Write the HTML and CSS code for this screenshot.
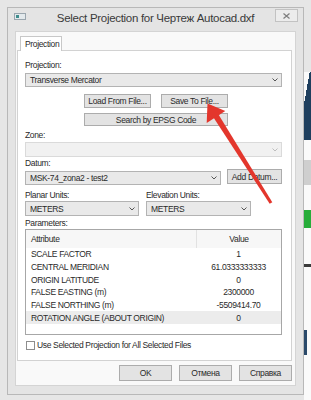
FILE: index.html
```html
<!DOCTYPE html>
<html lang="en">

<head>
  <meta charset="UTF-8">
  <meta name="viewport" content="width=device-width, initial-scale=1.0">
  <title>Select Projection</title>
  <link rel="stylesheet" href="styles.css">
</head>

<body>
  <div class="screen">
    <div class="dialog">
      <div class="title-bar">
        <svg class="app-icon" width="12" height="7" viewBox="0 0 12 7">
          <rect x="0.5" y="0.5" width="11" height="6" fill="#e3e9ec" stroke="#9aa6ae" />
          <rect x="2" y="2" width="3" height="3" fill="#3f8c8c" />
        </svg>
        <div class="title">Select Projection for Чертеж Autocad.dxf</div>
        <div class="close-btn">
          <svg width="7" height="6" viewBox="0 0 7 6">
            <path d="M0.5 0.5 L6.5 5.5 M6.5 0.5 L0.5 5.5" stroke="#7d7d7d" stroke-width="1.2" fill="none" />
          </svg>
        </div>
      </div>

      <div class="client">
        <div class="tabs">
          <div class="tab">Projection</div>
        </div>

        <div class="tab-page">
          <div class="label">Projection:</div>
          <div class="combo combo-projection">
            <span>Transverse Mercator</span>
            <svg class="chevron" width="6" height="4" viewBox="0 0 6 4"><polyline points="0.5,0.5 3,3 5.5,0.5" /></svg>
          </div>

          <div class="file-buttons">
            <div class="button-row">
              <div class="btn btn-file">Load From File...</div>
              <div class="btn btn-file">Save To File...</div>
            </div>
            <div class="btn btn-epsg">Search by EPSG Code</div>
          </div>

          <div class="label label-zone">Zone:</div>
          <div class="combo combo-zone disabled">
            <span></span>
            <svg class="chevron" width="6" height="4" viewBox="0 0 6 4"><polyline points="0.5,0.5 3,3 5.5,0.5" /></svg>
          </div>

          <div class="label">Datum:</div>
          <div class="datum-row">
            <div class="combo combo-datum">
              <span>MSK-74_zona2 - test2</span>
              <svg class="chevron" width="6" height="4" viewBox="0 0 6 4"><polyline points="0.5,0.5 3,3 5.5,0.5" /></svg>
            </div>
            <div class="btn btn-datum">Add Datum...</div>
          </div>

          <div class="units-grid">
            <div class="label">Planar Units:</div>
            <div class="label">Elevation Units:</div>
            <div class="combo combo-units">
              <span>METERS</span>
              <svg class="chevron" width="6" height="4" viewBox="0 0 6 4"><polyline points="0.5,0.5 3,3 5.5,0.5" /></svg>
            </div>
            <div class="combo combo-units">
              <span>METERS</span>
              <svg class="chevron" width="6" height="4" viewBox="0 0 6 4"><polyline points="0.5,0.5 3,3 5.5,0.5" /></svg>
            </div>
          </div>

          <div class="label label-params">Parameters:</div>
          <div class="params">
            <div class="params-head">
              <div class="col-attr">Attribute</div>
              <div class="col-value">Value</div>
            </div>
            <div class="params-row">
              <div class="col-attr">SCALE FACTOR</div>
              <div class="col-value">1</div>
            </div>
            <div class="params-row">
              <div class="col-attr">CENTRAL MERIDIAN</div>
              <div class="col-value">61.0333333333</div>
            </div>
            <div class="params-row">
              <div class="col-attr">ORIGIN LATITUDE</div>
              <div class="col-value">0</div>
            </div>
            <div class="params-row">
              <div class="col-attr">FALSE EASTING (m)</div>
              <div class="col-value">2300000</div>
            </div>
            <div class="params-row">
              <div class="col-attr">FALSE NORTHING (m)</div>
              <div class="col-value">-5509414.70</div>
            </div>
            <div class="params-row row-alt">
              <div class="col-attr">ROTATION ANGLE (ABOUT ORIGIN)</div>
              <div class="col-value">0</div>
            </div>
          </div>

          <label class="check-row">
            <span class="checkbox"></span>
            Use Selected Projection for All Selected Files
          </label>
        </div>

        <div class="footer">
          <div class="btn btn-footer">OK</div>
          <div class="btn btn-footer">Отмена</div>
          <div class="btn btn-footer">Справка</div>
        </div>
      </div>
    </div>

    <!-- bit of the app window behind the dialog -->
    <div class="backdrop-app">
      <div class="band band-top"></div>
      <div class="band band-logo"></div>
      <div class="band band-gap1"></div>
      <div class="band band-gray"></div>
      <div class="band band-gap2"></div>
      <div class="band band-green"></div>
      <div class="band band-gap3"></div>
      <div class="band band-rule"></div>
      <div class="band band-gap4"></div>
      <div class="band band-letter"></div>
      <div class="band band-rest"></div>
    </div>

    <!-- red annotation arrow drawn over the screenshot -->
    <svg class="arrow" width="311" height="400" viewBox="0 0 311 400">
      <polygon points="218.5,114.4 272.3,202.2 269.7,203.8 213.5,117.6" fill="#e3362c" />
      <polygon points="207.5,103.5 225.3,111.1 206.7,122.9" fill="#e3362c" />
    </svg>
  </div>
</body>

</html>
```

FILE: styles.css
```css
* {
  box-sizing: border-box;
}

body {
  margin: 0;
  background: #e6e6e6;
  font-family: "Liberation Sans", Arial, sans-serif;
  font-size: 8.5px;
  letter-spacing: -0.35px;
  color: #2a2a2a;
}

.screen {
  position: relative;
  display: flex;
  width: 311px;
  height: 400px;
  overflow: hidden;
}

/* window */
.dialog {
  flex: none;
  display: flex;
  flex-direction: column;
  width: 297px;
  height: 388px;
  margin: 7px 0 0 7px;
  padding: 0 7px 8px 7px;
  border: 1px solid #b8b8b8;
  background: #e4e4e4;
}

.title-bar {
  display: grid;
  grid-template-columns: 1fr auto 1fr;
  height: 23px;
  margin: 0 -7px;
}

.app-icon {
  justify-self: start;
  margin: 5px 0 0 6px;
}

.title {
  margin-top: 3px;
  font-size: 11.5px;
  letter-spacing: -0.3px;
  line-height: 14px;
  color: #3a3a3a;
  white-space: nowrap;
}

.close-btn {
  justify-self: end;
  display: flex;
  align-items: center;
  justify-content: center;
  width: 23px;
  height: 13px;
  margin: 1px 5px 0 0;
  border: 1px solid #c2c2c2;
  background: #ececec;
}

.client {
  flex: 1;
  padding: 4px 3px 0 1px;
  border: 1px solid #d4d4d4;
  background: #f9f9f9;
}

/* tab control */
.tabs {
  display: flex;
  padding-left: 3px;
}

.tab {
  position: relative;
  z-index: 1;
  width: 42px;
  height: 15px;
  margin-bottom: -1px;
  padding: 2px 0 0 4px;
  border: 1px solid #c8c8c8;
  border-bottom: none;
  background: #fff;
  line-height: 11px;
}

.tab-page {
  height: 311px;
  padding: 8px 9px 0 7px;
  border: 1px solid #d2d2d2;
  background: #fff;
}

.label {
  height: 12px;
  line-height: 12px;
  white-space: nowrap;
}

.label-zone {
  margin-top: 3px;
}

.label-params {
  margin-top: 1px;
}

/* combo boxes */
.combo {
  display: flex;
  align-items: center;
  justify-content: space-between;
  height: 15px;
  padding: 0 3px 0 4px;
  border: 1px solid #b3b3b3;
  background: #e9e9e9;
  white-space: nowrap;
}

.chevron polyline {
  fill: none;
  stroke: #555;
  stroke-width: 1;
}

.combo-projection {
  height: 14px;
  margin-top: 2px;
}

.combo-zone {
  margin-top: 1px;
}

.combo.disabled {
  border-color: #dadada;
  background: #f1f1f1;
}

.combo.disabled .chevron polyline {
  stroke: #bdbdbd;
}

/* push buttons */
.btn {
  display: flex;
  align-items: center;
  justify-content: center;
  border: 1px solid #acacac;
  background: #e3e3e3;
  white-space: nowrap;
}

.file-buttons {
  display: flex;
  flex-direction: column;
  gap: 5px;
  width: 144px;
  margin: 7px 0 0 59px;
}

.button-row {
  display: flex;
  gap: 10px;
}

.btn-file {
  width: 67px;
  height: 14px;
}

.btn-epsg {
  height: 13px;
}

.datum-row {
  display: flex;
  align-items: flex-start;
  gap: 6px;
  height: 16px;
}

.combo-datum {
  width: 196px;
  height: 14px;
  margin-top: 2px;
}

.btn-datum {
  width: 55px;
  height: 15px;
}

.units-grid {
  display: grid;
  grid-template-columns: 114px 105px;
  column-gap: 7px;
  margin-top: 4px;
}

/* parameter list */
.params {
  height: 106px;
  border: 1px solid #a7a7a7;
  background: #fff;
}

.params-head,
.params-row {
  display: grid;
  grid-template-columns: 170px 1fr;
  align-items: center;
}

.params-head {
  height: 18px;
  background: #f7f7f7;
}

.params-head .col-value {
  align-self: stretch;
  display: flex;
  align-items: center;
  justify-content: center;
  border-left: 1px solid #e2e2e2;
}

.params-row {
  height: 12.7px;
}

.row-alt {
  background: #ececec;
}

.col-attr {
  padding-left: 5px;
  white-space: nowrap;
}

.col-value {
  text-align: center;
  white-space: nowrap;
}

.check-row {
  display: flex;
  align-items: center;
  gap: 2px;
  height: 12px;
  margin-top: 4px;
  white-space: nowrap;
}

.checkbox {
  width: 9px;
  height: 9px;
  margin-left: 1px;
  border: 1px solid #8e8e8e;
  background: #fff;
}

.footer {
  display: flex;
  justify-content: flex-end;
  gap: 7px;
  margin-top: 4px;
}

.btn-footer {
  width: 53px;
  height: 16px;
}

/* the other program peeking out on the right */
.backdrop-app {
  flex: 1;
  display: flex;
  flex-direction: column;
}

.band {
  flex: none;
  background: #fafafa;
}

.band-top {
  height: 72px;
  background: #e6e6e6;
}

.band-logo {
  height: 68px;
  background: linear-gradient(100deg, #fafafa 0 30%, #1f3f5e 30% 100%);
}

.band-gap1 {
  height: 20px;
}

.band-gray {
  height: 25px;
  background: #cfcfcf;
}

.band-gap2 {
  height: 25px;
}

.band-green {
  height: 18px;
  background: #27ad3a;
}

.band-gap3 {
  height: 36px;
}

.band-rule {
  height: 3px;
  background: #3a3a3a;
}

.band-gap4 {
  height: 63px;
}

.band-letter {
  height: 25px;
  background: linear-gradient(90deg, #2b4a6a 0 40%, #fafafa 40% 100%);
}

.band-rest {
  flex: 1;
}

.arrow {
  position: absolute;
  top: 0;
  left: 0;
  pointer-events: none;
}
```
